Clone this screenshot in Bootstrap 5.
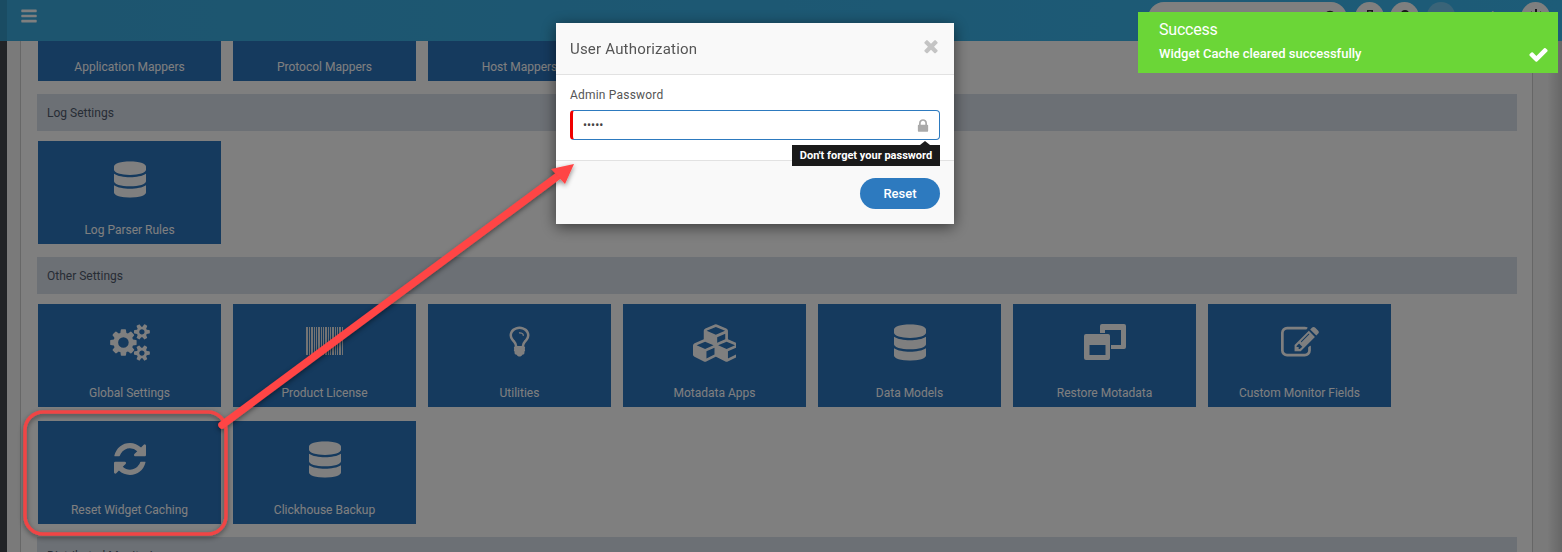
<!DOCTYPE html>
<html lang="en">
<head>
  <meta charset="UTF-8" />
  <meta name="viewport" content="width=device-width, initial-scale=1.0"/>
  <title>Settings</title>
  <link href="https://cdn.jsdelivr.net/npm/bootstrap@5.3.0/dist/css/bootstrap.min.css" rel="stylesheet"/>
  <style>
    html, body { height: 552px; overflow: hidden; }
    body { font-family: Roboto, "Liberation Sans", sans-serif; font-size: 12px; background: #fff; }
    .app-shell { height: 552px; overflow: hidden; }
    .top-bar { height: 41px; flex: none; background: linear-gradient(90deg, #3aaade, #3ab8f0); position: relative; }
    .top-edge { width: 7px; background: #3498c6; }
    .menu-icon { width: 18px; height: 18px; fill: #fff; margin: 7px 0 0 13px; }
    .top-tools { position: absolute; top: 2px; left: 1148px; }
    .search-pill { width: 199px; height: 32px; border-radius: 16px; background: #fff; padding: 8px 8px 0 0; margin-right: 8px; }
    .tool-glyph { width: 16px; height: 16px; fill: #333; display: block; }
    .round-tool { width: 29px; height: 30px; border-radius: 50%; background: #fff; margin-right: 6px; padding-top: 7px; }
    .round-avatar { width: 28px; height: 28px; border-radius: 50%; background: #74c8f0; margin-left: 2px; }
    .user-name { width: 50px; margin: 0 11px 0 5px; color: #fff; font-size: 13px; line-height: 30px; white-space: nowrap; }
    .dark-strip { width: 7px; background: #42464c; }
    .left-gutter { width: 14px; background: #f5f5f5; border-right: 1px solid #cfcfcf; }
    .right-gutter { width: 30px; background: linear-gradient(90deg, #f4f4f4 50%, #cecece); border-left: 1px solid #cccccc; }
    .page-body { width: 1511px; padding-left: 16px; }
    .tile-row { gap: 14px 12px; padding-left: 1px; }
    .settings-tile { width: 183px; height: 103px; background: #2b74bd; color: #fff; padding: 20px 0 7px; }
    .settings-tile:hover { color: #fff; }
    .tile-cut { height: 40px; padding: 0 0 7px; justify-content: flex-end; }
    .tile-icon { fill: #fff; flex: none; }
    .icon-barcode { margin-top: 3px; fill: #e6e6e6; }
    .icon-refresh { margin-top: 2px; }
    .tile-label { margin-top: auto; line-height: 14px; font-size: 12px; white-space: nowrap; }
    .section-bar { width: 1480px; height: 37px; background: #d9e0ea; color: #4f5a6b; line-height: 39px; padding-left: 10px; margin: 13px 0 10px; }
    .auth-modal { position: fixed; left: 556px; top: 23px; width: 398px; z-index: 1055; }
    .auth-modal .modal-content { border: 0; border-radius: 0; height: 201px; box-shadow: 0 3px 14px rgba(0,0,0,.55); background: #f9f9f9; }
    .auth-head { height: 52px; padding: 2px 13px 0 14px; border-bottom: 1px solid #e2e2e2; flex: none; }
    .auth-title { font-size: 15px; color: #555; letter-spacing: .2px; }
    .close-icon { width: 20px; height: 20px; fill: #c4c4c4; margin-top: -7px; }
    .auth-body { height: 86px; flex: none; background: #fff; padding: 13px 14px 0; border-bottom: 1px solid #e2e2e2; position: relative; }
    .auth-label { font-size: 12px; color: #555; letter-spacing: .2px; line-height: 14px; margin-bottom: 8px; }
    .pwd-input { height: 30px; border: 1px solid #2d7abf; border-left: 3px solid #f00000; border-radius: 4px; font-size: 12px; padding: 0 10px; color: #444; }
    .pwd-input:focus { border-color: #2d7abf; border-left-color: #f00000; box-shadow: none; }
    .lock-icon { position: absolute; left: 359px; top: 43px; width: 16px; height: 16px; fill: #aaa; }
    .pwd-tip { position: absolute; left: 236px; top: 70px; width: 148px; height: 21px; background: #1a1a1a; color: #fff; font-size: 11px; font-weight: 700; line-height: 21px; text-align: center; z-index: 2; }
    .pwd-tip::before { content: ""; position: absolute; top: -4px; right: 10px; border: 5px solid transparent; border-top: 0; border-bottom: 4px solid #1a1a1a; }
    .auth-foot { flex: 1; padding: 17px 14px 0; }
    .reset-btn { width: 80px; height: 31px; background: #2d7abf; border: 0; border-radius: 16px; color: #fff; font-size: 13px; font-weight: 500; padding: 0; }
    .note-layer { position: fixed; left: 0; top: 0; width: 1562px; height: 552px; z-index: 1060; pointer-events: none; }
    .done-toast { position: fixed; left: 1138px; top: 12px; width: 420px; height: 61px; background: #6bd637; color: #fff; z-index: 1070; padding: 8px 12px 0 21px; }
    .toast-title { font-size: 16px; line-height: 20px; letter-spacing: -.2px; margin-bottom: 7px; }
    .toast-text { font-size: 13px; font-weight: 500; line-height: 14px; }
    .check-icon { position: absolute; right: 9px; top: 32px; width: 21px; height: 21px; fill: #fff; }
  </style>
</head>
<body>

  <svg width="0" height="0" class="position-absolute">
    <defs>
      <symbol id="i-db" viewBox="0 0 448 512"><path d="M448 73.143v45.714C448 159.143 347.667 192 224 192S0 159.143 0 118.857V73.143C0 32.857 100.333 0 224 0s224 32.857 224 73.143zM448 176v102.857C448 319.143 347.667 352 224 352S0 319.143 0 278.857V176c48.125 33.143 136.208 48.572 224 48.572S399.874 209.143 448 176zm0 160v102.857C448 479.143 347.667 512 224 512S0 479.143 0 438.857V336c48.125 33.143 136.208 48.572 224 48.572S399.874 369.143 448 336z"/></symbol>
    </defs>
  </svg>

  <div class="app-shell d-flex flex-column">
    <div class="top-bar d-flex">
      <div class="top-edge"></div>
      <svg class="menu-icon" viewBox="0 0 1792 1792"><path d="M1664 1344v128q0 26-19 45t-45 19h-1408q-26 0-45-19t-19-45v-128q0-26 19-45t45-19h1408q26 0 45 19t19 45zm0-512v128q0 26-19 45t-45 19h-1408q-26 0-45-19t-19-45v-128q0-26 19-45t45-19h1408q26 0 45 19t19 45zm0-512v128q0 26-19 45t-45 19h-1408q-26 0-45-19t-19-45v-128q0-26 19-45t45-19h1408q26 0 45 19t19 45z"/></svg>
      <div class="top-tools d-flex align-items-start">
        <div class="search-pill d-flex justify-content-end">
          <svg class="tool-glyph" viewBox="0 0 16 16"><circle cx="7" cy="7" r="5" fill="none" stroke="#333" stroke-width="2.4"/><path d="M10.5 10.5 15 15" stroke="#333" stroke-width="2.4"/></svg>
        </div>
        <div class="round-tool d-flex justify-content-center">
          <svg class="tool-glyph" viewBox="0 0 16 16"><path d="M5 1h6v3h4v9H1V4h4zm1.5 1.5V4h3V2.500z" fill-rule="evenodd"/></svg>
        </div>
        <div class="round-tool d-flex justify-content-center">
          <svg class="tool-glyph" viewBox="0 0 16 16"><circle cx="8" cy="5" r="4"/><path d="M1 15c0-4 3-6 7-6s7 2 7 6z"/></svg>
        </div>
        <div class="round-avatar"></div>
        <div class="user-name">Hi, Admin</div>
        <div class="round-tool d-flex justify-content-center">
          <svg class="tool-glyph" viewBox="0 0 16 16"><path d="M7 0h2v8H7z"/><path d="M4 3a6.500 6.500 0 1 0 8 0" fill="none" stroke="#333" stroke-width="2"/></svg>
        </div>
      </div>
    </div>

    <div class="d-flex flex-grow-1">
      <div class="dark-strip"></div>
      <div class="left-gutter"></div>
      <div class="page-body">
        <div class="tile-row d-flex flex-wrap">
          <a class="settings-tile tile-cut d-flex flex-column align-items-center text-decoration-none" href="#"><span class="tile-label">Application Mappers</span></a>
          <a class="settings-tile tile-cut d-flex flex-column align-items-center text-decoration-none" href="#"><span class="tile-label">Protocol Mappers</span></a>
          <a class="settings-tile tile-cut d-flex flex-column align-items-center text-decoration-none" href="#"><span class="tile-label">Host Mappers</span></a>
        </div>

        <div class="section-bar">Log Settings</div>
        <div class="tile-row d-flex flex-wrap">
          <a class="settings-tile d-flex flex-column align-items-center text-decoration-none" href="#">
            <svg class="tile-icon" width="32" height="37" viewBox="0 0 448 512"><use href="#i-db"/></svg>
            <span class="tile-label">Log Parser Rules</span>
          </a>
        </div>

        <div class="section-bar">Other Settings</div>
        <div class="tile-row d-flex flex-wrap">
          <a class="settings-tile d-flex flex-column align-items-center text-decoration-none" href="#">
            <svg class="tile-icon" width="40" height="37" viewBox="0 0 1920 1792"><path d="M896 896q0-106-75-181t-181-75-181 75-75 181 75 181 181 75 181-75 75-181zm768 512q0-52-38-90t-90-38-90 38-38 90q0 53 37.5 90.5t90.5 37.5 90.5-37.5 37.5-90.5zm0-1024q0-52-38-90t-90-38-90 38-38 90q0 53 37.5 90.5t90.5 37.5 90.5-37.5 37.5-90.5zm-384 421v185q0 10-7 19.5t-16 10.5l-155 24q-11 35-32 76 34 48 90 115 7 11 7 20 0 12-7 19-23 30-82.5 89.5t-78.5 59.5q-11 0-21-7l-115-90q-37 19-77 31-11 108-23 155-7 24-30 24h-186q-11 0-20-7.5t-10-17.5l-23-153q-34-10-75-31l-118 89q-7 7-20 7-11 0-21-8-144-133-144-160 0-9 7-19 10-14 41-53t47-61q-23-44-35-82l-152-24q-10-1-17-9.5t-7-19.5v-185q0-10 7-19.5t16-10.5l155-24q11-35 32-76-34-48-90-115-7-11-7-20 0-12 7-20 22-30 82-89t79-59q11 0 21 7l115 90q34-18 77-32 11-108 23-154 7-24 30-24h186q11 0 20 7.5t10 17.5l23 153q34 10 75 31l118-89q8-7 20-7 11 0 21 8 144 133 144 160 0 8-7 19-12 16-42 54t-45 60q23 48 34 82l152 23q10 2 17 10.5t7 19.5zm640 533v140q0 16-149 31-12 27-30 52 51 113 51 138 0 4-4 7-122 71-124 71-8 0-46-47t-52-68q-20 2-30 2t-30-2q-14 21-52 68t-46 47q-2 0-124-71-4-3-4-7 0-25 51-138-18-25-30-52-149-15-149-31v-140q0-16 149-31 13-29 30-52-51-113-51-138 0-4 4-7 4-2 35-20t59-34 30-16q8 0 46 46.5t52 67.5q20-2 30-2t30 2q51-71 92-112l6-2q4 0 124 70 4 3 4 7 0 25-51 138 17 23 30 52 149 15 149 31zm0-1024v140q0 16-149 31-12 27-30 52 51 113 51 138 0 4-4 7-122 71-124 71-8 0-46-47t-52-68q-20 2-30 2t-30-2q-14 21-52 68t-46 47q-2 0-124-71-4-3-4-7 0-25 51-138-18-25-30-52-149-15-149-31v-140q0-16 149-31 13-29 30-52-51-113-51-138 0-4 4-7 4-2 35-20t59-34 30-16q8 0 46 46.5t52 67.5q20-2 30-2t30 2q51-71 92-112l6-2q4 0 124 70 4 3 4 7 0 25-51 138 17 23 30 52 149 15 149 31z"/></svg>
            <span class="tile-label">Global Settings</span>
          </a>
          <a class="settings-tile d-flex flex-column align-items-center text-decoration-none" href="#">
            <svg class="tile-icon icon-barcode" width="37" height="28" viewBox="0 0 37 28"><path d="M0 0h2v28H0zM3 0h1v28H3zM5 0h2v28H5zM8 0h1v28H8zM10 0h1v28h-1zM12 0h2v28h-2zM15 0h1v28h-1zM17 0h1v28h-1zM19 0h2v28h-2zM22 0h1v28h-1zM24 0h1v28h-1zM26 0h2v28h-2zM29 0h1v28h-1zM31 0h1v28h-1zM33 0h2v28h-2zM36 0h1v28h-1z"/></svg>
            <span class="tile-label">Product License</span>
          </a>
          <a class="settings-tile d-flex flex-column align-items-center text-decoration-none" href="#">
            <svg class="tile-icon" width="35" height="35" viewBox="0 0 1792 1792"><path d="M1120 576q0 13-9.5 22.5t-22.5 9.5-22.5-9.5-9.5-22.5q0-46-54-71t-106-25q-13 0-22.5-9.5t-9.5-22.5 9.5-22.5 22.5-9.5q50 0 99.5 16t87 54 37.5 90zm160 0q0-72-34.5-134t-90-101.5-123-62-136.5-22.5-136.5 22.5-123 62-90 101.5-34.5 134q0 101 68 180 10 11 30.5 33t30.5 33q128 153 141 298h228q13-145 141-298 10-11 30.5-33t30.5-33q68-79 68-180zm128 0q0 155-103 268-45 49-74.5 87t-59.5 95.5-34 107.5q47 28 47 82 0 37-25 64 25 27 25 64 0 52-45 81 13 23 13 47 0 46-31.5 71t-77.5 25q-20 44-60 70t-87 26-87-26-60-70q-46 0-77.5-25t-31.5-71q0-24 13-47-45-29-45-81 0-37 25-64-25-27-25-64 0-54 47-82-4-50-34-107.5t-59.5-95.5-74.5-87q-103-113-103-268 0-99 44.5-184.5t117-142 164-89 186.5-32.5 186.5 32.5 164 89 117 142 44.5 184.5z"/></svg>
            <span class="tile-label">Utilities</span>
          </a>
          <a class="settings-tile d-flex flex-column align-items-center text-decoration-none" href="#">
            <svg class="tile-icon" width="43" height="38" viewBox="0 0 2048 1792"><path d="M640 1632l384-192v-314l-384 164v342zm-64-454l404-173-404-173-404 173zm1088 454l384-192v-314l-384 164v342zm-64-454l404-173-404-173-404 173zm-448-293l384-165v-266l-384 164v267zm-64-379l441-189-441-189-441 189zm1088 518v416q0 36-19 67t-52 47l-448 224q-25 14-57 14t-57-14l-448-224q-5-2-7-4-2 2-7 4l-448 224q-25 14-57 14t-57-14l-448-224q-33-16-52-47t-19-67v-416q0-38 21.5-70t56.5-48l434-186v-400q0-38 21.5-70t56.5-48l448-192q23-10 50-10t50 10l448 192q35 16 56.5 48t21.5 70v400l434 186q36 16 57 48t21 70z"/></svg>
            <span class="tile-label">Motadata Apps</span>
          </a>
          <a class="settings-tile d-flex flex-column align-items-center text-decoration-none" href="#">
            <svg class="tile-icon" width="32" height="37" viewBox="0 0 448 512"><use href="#i-db"/></svg>
            <span class="tile-label">Data Models</span>
          </a>
          <a class="settings-tile d-flex flex-column align-items-center text-decoration-none" href="#">
            <svg class="tile-icon" width="42" height="36" viewBox="0 0 42 36"><path fill-rule="evenodd" d="M2 10h22a2 2 0 0 1 2 2v22a2 2 0 0 1-2 2H2a2 2 0 0 1-2-2V12a2 2 0 0 1 2-2zm3.500 11v10h16V21z"/><path d="M18 0h22a2 2 0 0 1 2 2v21a2 2 0 0 1-2 2H27v-4h10V6H21v3h-5V2a2 2 0 0 1 2-2z"/></svg>
            <span class="tile-label">Restore Motadata</span>
          </a>
          <a class="settings-tile d-flex flex-column align-items-center text-decoration-none" href="#">
            <svg class="tile-icon" width="38" height="38" viewBox="0 0 1792 1792"><path d="M888 1184l116-116-152-152-116 116v56h96v96h56zm440-720q-16-16-33 1l-350 350q-17 17-1 33t33-1l350-350q17-17 1-33zm80 594v190q0 119-84.500 203.500t-203.500 84.500h-832q-119 0-203.500-84.500t-84.500-203.500v-832q0-119 84.500-203.500t203.500-84.500h832q63 0 117 25 15 7 18 23 3 17-9 29l-49 49q-14 14-32 8-23-6-45-6h-832q-66 0-113 47t-47 113v832q0 66 47 113t113 47h832q66 0 113-47t47-113v-126q0-13 9-22l64-64q15-15 35-7t20 29zm-96-738l288 288-672 672h-288v-288zm444 132l-92 92-288-288 92-92q28-28 68-28t68 28l152 152q28 28 28 68t-28 68z"/></svg>
            <span class="tile-label">Custom Monitor Fields</span>
          </a>
          <a class="settings-tile d-flex flex-column align-items-center text-decoration-none" href="#">
            <svg class="tile-icon icon-refresh" width="32" height="32" viewBox="0 0 1536 1536"><path d="M1511 928q0 5-1 7-64 268-268 434.500t-478 166.500q-146 0-282.500-55t-243.500-157l-129 129q-19 19-45 19t-45-19-19-45v-448q0-26 19-45t45-19h448q26 0 45 19t19 45-19 45l-137 137q71 66 161 102t187 36q134 0 250-65t186-179q11-17 53-117 8-23 30-23h192q13 0 22.500 9.500t9.500 22.500zm25-800v448q0 26-19 45t-45 19h-448q-26 0-45-19t-19-45 19-45l138-138q-148-137-349-137-134 0-250 65t-186 179q-11 17-53 117-8 23-30 23h-199q-13 0-22.500-9.500t-9.500-22.500v-7q65-268 270-434.500t480-166.500q146 0 284 55.500t245 156.500l130-129q19-19 45-19t45 19 19 45z"/></svg>
            <span class="tile-label">Reset Widget Caching</span>
          </a>
          <a class="settings-tile d-flex flex-column align-items-center text-decoration-none" href="#">
            <svg class="tile-icon" width="32" height="37" viewBox="0 0 448 512"><use href="#i-db"/></svg>
            <span class="tile-label">Clickhouse Backup</span>
          </a>
        </div>

        <div class="section-bar">Distributed Monitoring</div>
      </div>
      <div class="right-gutter"></div>
    </div>
  </div>

  <div class="modal-backdrop fade show"></div>

  <div class="auth-modal">
    <div class="modal-content">
      <div class="auth-head d-flex align-items-center justify-content-between">
        <span class="auth-title">User Authorization</span>
        <svg class="close-icon" viewBox="0 0 1792 1792"><path d="M1490 1322q0 40-28 68l-136 136q-28 28-68 28t-68-28l-294-294-294 294q-28 28-68 28t-68-28l-136-136q-28-28-28-68t28-68l294-294-294-294q-28-28-28-68t28-68l136-136q28-28 68-28t68 28l294 294 294-294q28-28 68-28t68 28l136 136q28 28 28 68t-28 68l-294 294 294 294q28 28 28 68z"/></svg>
      </div>
      <div class="auth-body">
        <div class="auth-label">Admin Password</div>
        <input type="password" class="form-control pwd-input" value="admin" />
        <svg class="lock-icon" viewBox="0 0 1792 1792"><path d="M640 768h512v-192q0-106-75-181t-181-75-181 75-75 181v192zm832 96v576q0 40-28 68t-68 28h-960q-40 0-68-28t-28-68v-576q0-40 28-68t68-28h32v-192q0-184 132-316t316-132 316 132 132 316v192h32q40 0 68 28t28 68z"/></svg>
        <div class="pwd-tip">Don't forget your password</div>
      </div>
      <div class="auth-foot d-flex justify-content-end align-items-start">
        <button type="button" class="btn reset-btn">Reset</button>
      </div>
    </div>
  </div>

  <svg class="note-layer" viewBox="0 0 1562 552">
    <defs>
      <filter id="noteShadow" x="-10%" y="-10%" width="120%" height="120%"><feDropShadow dx="0" dy="2" stdDeviation="2.500" flood-color="#000" flood-opacity=".45"/></filter>
    </defs>
    <g filter="url(#noteShadow)">
      <rect x="25" y="412" width="201" height="122" rx="18" fill="none" stroke="#f04444" stroke-width="3.500"/>
      <path d="M222 425 L560 174.500" fill="none" stroke="#ff4444" stroke-width="7.500" stroke-linecap="round"/>
      <path d="M574 164 L551 169 L565 184 Z" fill="#ff4444"/>
    </g>
  </svg>

  <div class="done-toast">
    <div class="toast-title">Success</div>
    <div class="toast-text">Widget Cache cleared successfully</div>
    <svg class="check-icon" viewBox="0 0 1792 1792"><path d="M1671 566q0 40-28 68l-724 724-136 136q-28 28-68 28t-68-28l-136-136-362-362q-28-28-28-68t28-68l136-136q28-28 68-28t68 28l294 295 656-657q28-28 68-28t68 28l136 136q28 28 28 68z"/></svg>
  </div>

  <script src="https://cdn.jsdelivr.net/npm/bootstrap@5.3.0/dist/js/bootstrap.bundle.min.js"></script>
</body>
</html>
